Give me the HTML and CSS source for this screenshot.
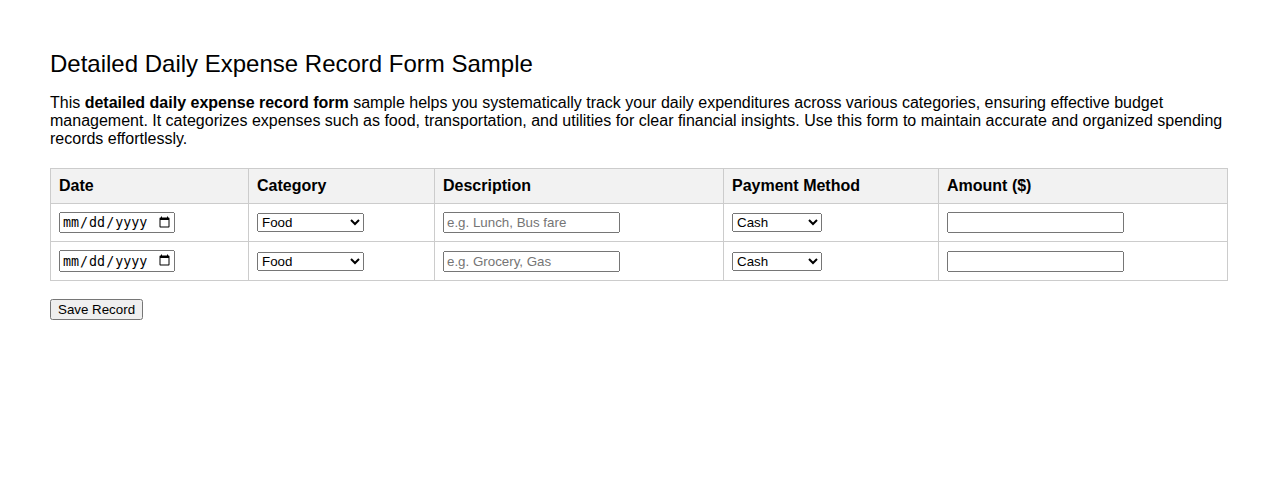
FILE: index.html
```html
<!DOCTYPE html>
<html>
<head>
  <title>Daily Expense Record Form</title>
  <link rel="stylesheet" href="styles.css">
</head>
<body>
  <h1>Detailed Daily Expense Record Form Sample</h1>
  <p>This <strong>detailed daily expense record form</strong> sample helps you systematically track your daily expenditures across various categories, ensuring effective budget management. It categorizes expenses such as food, transportation, and utilities for clear financial insights. Use this form to maintain accurate and organized spending records effortlessly.</p>

  <form>
    <table>
      <thead>
        <tr>
          <th class="col-date">Date</th>
          <th class="col-category">Category</th>
          <th class="col-desc">Description</th>
          <th class="col-payment">Payment Method</th>
          <th>Amount ($)</th>
        </tr>
      </thead>
      <tbody>
        <tr>
          <td><input type="date" name="date1" class="date-input"></td>
          <td>
            <select name="category1" class="category-select">
              <option>Food</option>
              <option>Transport</option>
              <option>Utilities</option>
              <option>Entertainment</option>
              <option>Other</option>
            </select>
          </td>
          <td><input type="text" name="desc1" class="text-input" placeholder="e.g. Lunch, Bus fare"></td>
          <td>
            <select name="payment1" class="payment-select">
              <option>Cash</option>
              <option>Credit Card</option>
              <option>Debit Card</option>
              <option>Online</option>
            </select>
          </td>
          <td><input type="number" name="amount1" class="text-input" step="0.01"></td>
        </tr>
        <tr>
          <td><input type="date" name="date2" class="date-input"></td>
          <td>
            <select name="category2" class="category-select">
              <option>Food</option>
              <option>Transport</option>
              <option>Utilities</option>
              <option>Entertainment</option>
              <option>Other</option>
            </select>
          </td>
          <td><input type="text" name="desc2" class="text-input" placeholder="e.g. Grocery, Gas"></td>
          <td>
            <select name="payment2" class="payment-select">
              <option>Cash</option>
              <option>Credit Card</option>
              <option>Debit Card</option>
              <option>Online</option>
            </select>
          </td>
          <td><input type="number" name="amount2" class="text-input" step="0.01"></td>
        </tr>
      </tbody>
    </table>
    <button type="submit" class="save-btn">Save Record</button>
  </form>
</body>
</html>
```

FILE: styles.css
```css
body {
  font-family: Arial, "Liberation Sans", sans-serif;
  margin: 50px;
  color: #000;
}

h1 {
  font-size: 24px;
  font-weight: normal;
  margin-top: 0;
}

p {
  margin-bottom: 20px;
}

table {
  width: 100%;
  border-collapse: collapse;
  table-layout: fixed;
}

th, td {
  border: 1px solid #ccc;
  padding: 8px;
  text-align: left;
  box-sizing: border-box;
}

th {
  background-color: #f2f2f2;
}

.col-date { width: 198px; }
.col-category { width: 186px; }
.col-desc { width: 289px; }
.col-payment { width: 215px; }

.date-input {
  width: 116px;
  box-sizing: border-box;
}

.text-input {
  width: 177px;
  box-sizing: border-box;
}

.category-select {
  width: 107px;
}

.payment-select {
  width: 90px;
}

.save-btn {
  margin-top: 18px;
}
```
